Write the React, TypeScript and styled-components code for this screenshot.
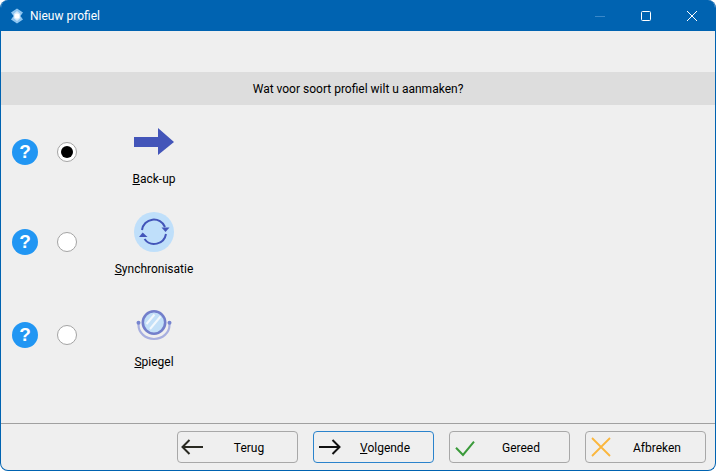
import React from 'react';
import styled, { createGlobalStyle } from 'styled-components';

const GlobalStyle = createGlobalStyle`
  html, body {
    margin: 0;
    padding: 0;
    background: #ffffff;
  }
`;

function AppIcon() {
  return (
    <svg width="14" height="16" viewBox="0 0 14 16">
      <path d="M7 0.5 L13 4.5 L10.5 8 L13 11.5 L7 15.5 L1 11.5 L3.5 8 L1 4.5 Z" fill="#8cc4f0" />
      <path d="M7 3 L10.5 6 L9.5 8 L10.5 10 L7 13 L3.5 10 L4.5 8 L3.5 6 Z" fill="#cfe6fa" />
      <circle cx="7" cy="8" r="2.6" fill="#ffffff" />
    </svg>
  );
}

function BackupIcon() {
  return (
    <svg width="40" height="40" viewBox="0 0 40 40">
      <path d="M0 15 H24 V6 L40 20 L24 33 V25 H0 Z" fill="#4355b9" />
    </svg>
  );
}

function SyncIcon() {
  return (
    <svg width="40" height="40" viewBox="0 0 40 40">
      <circle cx="20" cy="20" r="20" fill="#bfdffa" />
      <path d="M8 18 A12 12 0 0 1 31 15" fill="none" stroke="#4355b9" strokeWidth="2" />
      <path d="M32 22 A12 12 0 0 1 10.5 27" fill="none" stroke="#4355b9" strokeWidth="2" />
      <path d="M27.5 15.5 H35.5 L31.5 20 Z" fill="#4355b9" />
      <path d="M5 25 H13.5 L8.7 20.5 Z" fill="#4355b9" />
    </svg>
  );
}

function MirrorIcon() {
  return (
    <svg width="40" height="40" viewBox="0 0 40 40">
      <path d="M4.5 18 V20 A15.5 14 0 0 0 35.5 20 V18" fill="none" stroke="#a8afdf" strokeWidth="2.2" />
      <circle cx="4.5" cy="17.8" r="2" fill="#7684cf" />
      <circle cx="35.5" cy="17.8" r="2" fill="#7684cf" />
      <circle cx="20" cy="17.5" r="11.2" fill="#c3e0f8" stroke="#737fcb" strokeWidth="2.6" />
      <path d="M12.5 19 L20.5 9.5 M16 24 L26.5 11.5" stroke="#f2f8fd" strokeWidth="2" />
    </svg>
  );
}

function ArrowLeft() {
  return (
    <svg width="32" height="16" viewBox="0 0 32 16">
      <path d="M4.5 8 H25 M11.5 1 L4.5 8 L11.5 15" fill="none" stroke="#2a2a22" strokeWidth="2" />
    </svg>
  );
}

function ArrowRight() {
  return (
    <svg width="32" height="16" viewBox="0 0 32 16">
      <path d="M5 8 H25.5 M18.5 1 L25.5 8 L18.5 15" fill="none" stroke="#111111" strokeWidth="2" />
    </svg>
  );
}

function CheckIcon() {
  return (
    <svg width="32" height="20" viewBox="0 0 32 20">
      <path d="M6 10.7 L13 18 L24 4.7" fill="none" stroke="#3a9a3a" strokeWidth="2" />
    </svg>
  );
}

function CrossIcon() {
  return (
    <svg width="32" height="20" viewBox="0 0 32 20">
      <path d="M6 1 L24 19 M24 1 L6 19" fill="none" stroke="#fbb63c" strokeWidth="1.8" />
    </svg>
  );
}

export default function App() {
  return (
    <>
      <GlobalStyle />
      <Window>
        <TitleBar>
          <TitleIcon>
            <AppIcon />
          </TitleIcon>
          <Title>Nieuw profiel</Title>
          <Controls>
            <ControlButton>
              <svg width="10" height="10" viewBox="0 0 10 10">
                <path d="M0 5.5 H10" stroke="#3a88c9" strokeWidth="1" />
              </svg>
            </ControlButton>
            <ControlButton>
              <svg width="10" height="10" viewBox="0 0 10 10">
                <rect x="0.5" y="0.5" width="9" height="9" rx="1" fill="none" stroke="#ffffff" strokeWidth="1" />
              </svg>
            </ControlButton>
            <ControlButton>
              <svg width="10" height="10" viewBox="0 0 10 10">
                <path d="M0 0 L10 10 M10 0 L0 10" stroke="#ffffff" strokeWidth="1" />
              </svg>
            </ControlButton>
          </Controls>
        </TitleBar>

        <Banner>Wat voor soort profiel wilt u aanmaken?</Banner>

        <Options>
          <OptionRow $height={90}>
            <Choice>
              <HelpBadge>?</HelpBadge>
              <Radio type="radio" name="kind" defaultChecked />
            </Choice>
            <Option>
              <OptionIcon>
                <BackupIcon />
              </OptionIcon>
              <OptionLabel>
                <u>B</u>ack-up
              </OptionLabel>
            </Option>
          </OptionRow>
          <OptionRow $height={93}>
            <Choice>
              <HelpBadge>?</HelpBadge>
              <Radio type="radio" name="kind" />
            </Choice>
            <Option>
              <OptionIcon>
                <SyncIcon />
              </OptionIcon>
              <OptionLabel>
                <u>S</u>ynchronisatie
              </OptionLabel>
            </Option>
          </OptionRow>
          <OptionRow $height={90}>
            <Choice>
              <HelpBadge>?</HelpBadge>
              <Radio type="radio" name="kind" />
            </Choice>
            <Option>
              <OptionIcon>
                <MirrorIcon />
              </OptionIcon>
              <OptionLabel>
                <u>S</u>piegel
              </OptionLabel>
            </Option>
          </OptionRow>
        </Options>

        <Footer>
          <WizardButton>
            <ArrowLeft />
            <ButtonLabel>Terug</ButtonLabel>
          </WizardButton>
          <WizardButton $focused>
            <ArrowRight />
            <ButtonLabel>
              <u>V</u>olgende
            </ButtonLabel>
          </WizardButton>
          <WizardButton>
            <CheckIcon />
            <ButtonLabel>Gereed</ButtonLabel>
          </WizardButton>
          <WizardButton>
            <CrossIcon />
            <ButtonLabel>Afbreken</ButtonLabel>
          </WizardButton>
        </Footer>
      </Window>
    </>
  );
}

const Window = styled.div`
  box-sizing: border-box;
  width: 716px;
  height: 471px;
  display: flex;
  flex-direction: column;
  background: #efefef;
  border: 1px solid #0063b1;
  border-top: none;
  border-radius: 8px;
  overflow: hidden;
  font-family: Roboto, 'Noto Sans', sans-serif;
  font-size: 12px;
  color: #000000;
`;

const TitleBar = styled.div`
  flex: none;
  height: 31px;
  display: flex;
  align-items: center;
  background: #0063b1;
  color: #ffffff;
`;

const TitleIcon = styled.div`
  width: 29px;
  display: flex;
  justify-content: center;
  padding-left: 3px;
  box-sizing: border-box;
`;

const Title = styled.div`
  flex: 1;
  font-size: 12px;
`;

const Controls = styled.div`
  display: flex;
  height: 100%;
`;

const ControlButton = styled.div`
  width: 46px;
  display: flex;
  align-items: center;
  justify-content: center;
`;

const Banner = styled.div`
  flex: none;
  height: 33px;
  margin-top: 41px;
  display: flex;
  align-items: center;
  justify-content: center;
  background: #dddddd;
`;

const Options = styled.div`
  flex: 1;
  display: flex;
  flex-direction: column;
  padding-top: 17px;
`;

const OptionRow = styled.div<{ $height: number }>`
  display: flex;
  align-items: flex-start;
  height: ${(p) => p.$height}px;
  padding-left: 11px;
`;

const Choice = styled.div`
  display: flex;
  align-items: center;
  height: 60px;
  gap: 19px;
`;

const HelpBadge = styled.div`
  width: 26px;
  height: 26px;
  border-radius: 50%;
  display: flex;
  align-items: center;
  justify-content: center;
  background: #2196f3;
  color: #ffffff;
  font-family: 'Liberation Sans', sans-serif;
  font-size: 19px;
  font-weight: 700;
`;

const Radio = styled.input`
  appearance: none;
  box-sizing: border-box;
  width: 20px;
  height: 20px;
  margin: 0;
  border-radius: 50%;
  border: 1px solid #a4a4a4;
  background: #ffffff;
  display: grid;
  place-items: center;

  &:checked::before {
    content: '';
    width: 12px;
    height: 12px;
    border-radius: 50%;
    background: #000000;
  }
`;

const Option = styled.div`
  width: 100px;
  margin-left: 27px;
  display: flex;
  flex-direction: column;
  align-items: center;
`;

const OptionIcon = styled.div`
  width: 40px;
  height: 40px;
`;

const OptionLabel = styled.div`
  margin-top: 9px;
  line-height: 16px;
  white-space: nowrap;
`;

const Footer = styled.div`
  flex: none;
  height: 47px;
  box-sizing: border-box;
  display: flex;
  justify-content: flex-end;
  align-items: flex-start;
  gap: 15px;
  padding: 7px 9px 0 0;
  border-top: 1px solid #a0a0a0;
`;

const WizardButton = styled.button<{ $focused?: boolean }>`
  box-sizing: border-box;
  width: 121px;
  height: 32px;
  padding: 0 9px 0 0;
  display: flex;
  align-items: center;
  background: #efefef;
  border: 1px solid ${(p) => (p.$focused ? '#2a83cc' : '#a8a8a8')};
  border-radius: 4px;
  font: inherit;
  color: inherit;
`;

const ButtonLabel = styled.span`
  flex: 1;
  text-align: center;
  padding-top: 1px;
`;
